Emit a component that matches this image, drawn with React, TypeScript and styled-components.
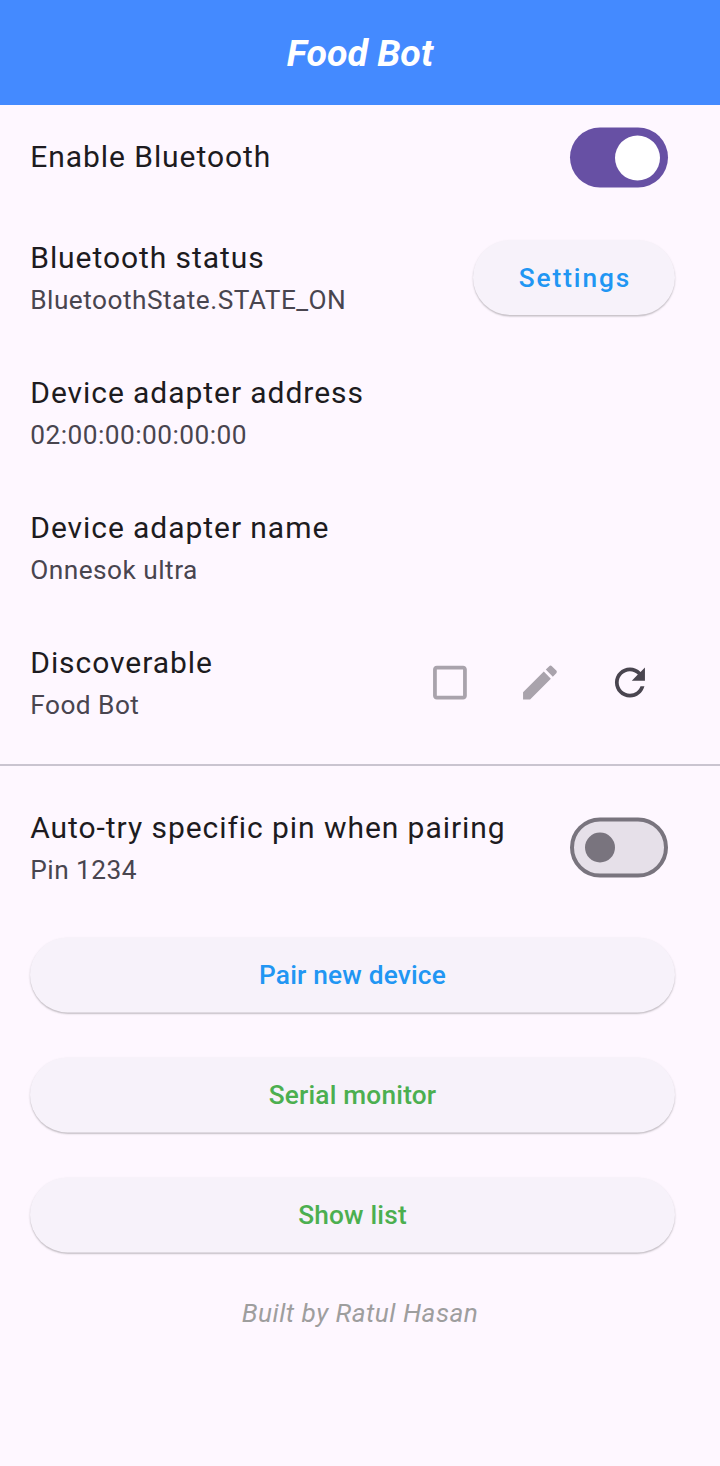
import React from 'react';
import styled, { createGlobalStyle, css } from 'styled-components';

const GlobalStyle = createGlobalStyle`
  * { box-sizing: border-box; }
  body { margin: 0; background: #fef7ff; font-family: Roboto, sans-serif; color: #1d1b20; }
`;

const Screen = styled.main`
  display: flex;
  flex-direction: column;
  min-height: 1466px;
  background: #fef7ff;
`;

const AppBar = styled.header`
  display: flex;
  align-items: center;
  justify-content: center;
  height: 105px;
  background: #448aff;
`;

const Title = styled.h1`
  margin: 0;
  font-size: 37.5px;
  line-height: 44px;
  font-weight: 700;
  font-style: italic;
  color: #fff;
`;

const Tile = styled.section<{ $height: number; $right?: number }>`
  display: flex;
  align-items: center;
  justify-content: space-between;
  height: ${(p) => p.$height}px;
  padding: 0 ${(p) => p.$right ?? 45}px 0 30.25px;
`;

const TileText = styled.div`
  display: flex;
  flex-direction: column;
`;

const Label = styled.div`
  padding-bottom: 2px;
  font-size: 30px;
  line-height: 43px;
  letter-spacing: 0.94px;
  white-space: nowrap;
`;

const Detail = styled.div`
  font-size: 26.25px;
  line-height: 38px;
  letter-spacing: 0.47px;
  color: #49454f;
  white-space: nowrap;
`;

const Switch = styled.div<{ $on?: boolean }>`
  display: flex;
  align-items: center;
  width: 97.5px;
  height: 60px;
  margin-bottom: 1px;
  border-radius: 30px;
  transform: translateY(0.5px);
  ${(p) =>
    p.$on
      ? css`
          justify-content: flex-end;
          padding: 0 7.5px;
          background: #6750a4;
        `
      : css`
          padding: 0 11px;
          background: #e6e0e9;
          border: 4px solid #79747e;
        `}
`;

const Thumb = styled.span<{ $on?: boolean }>`
  width: ${(p) => (p.$on ? 45 : 30)}px;
  height: ${(p) => (p.$on ? 45 : 30)}px;
  border-radius: 50%;
  background: ${(p) => (p.$on ? '#fff' : '#79747e')};
`;

const Button = styled.button<{ $color: string; $width?: number; $spacing?: number }>`
  width: ${(p) => (p.$width ? `${p.$width}px` : '100%')};
  height: 75px;
  padding: 0 0 0 ${(p) => (p.$spacing ?? 0)}px;
  border: 0;
  border-radius: 38px;
  background: #f7f2fa;
  box-shadow: 0 1.5px 1.5px rgba(0, 0, 0, 0.18), 0 1px 3px rgba(0, 0, 0, 0.07);
  font-family: inherit;
  font-size: 26.25px;
  font-weight: 500;
  letter-spacing: ${(p) => p.$spacing ?? 0.19}px;
  color: ${(p) => p.$color};
`;

const Actions = styled.div`
  display: flex;
  width: 270px;
  margin-bottom: 1px;
`;

const IconSlot = styled.span<{ $color: string }>`
  display: flex;
  width: 90px;
  justify-content: center;
  color: ${(p) => p.$color};

  svg {
    width: 45px;
    height: 45px;
    fill: currentColor;
  }
`;

const Divider = styled.hr`
  width: 100%;
  height: 2px;
  margin: 14px 0 14px;
  border: 0;
  background: #cac4d0;
`;

const ButtonList = styled.div`
  display: flex;
  flex-direction: column;
  gap: 45px;
  padding: 22px 45px 0 30px;

  ${Button} {
    padding-top: 1px;
    transform: translateY(0.4px);
  }
`;

const Footer = styled.footer`
  margin-top: 42px;
  font-size: 26.25px;
  line-height: 38px;
  letter-spacing: 0.47px;
  font-style: italic;
  text-align: center;
  color: #9e9e9e;
`;

const Item = ({ label, detail }: { label: string; detail?: string }) => (
  <TileText>
    <Label>{label}</Label>
    {detail && <Detail>{detail}</Detail>}
  </TileText>
);

const Toggle = ({ on }: { on?: boolean }) => (
  <Switch $on={on} role="switch" aria-checked={!!on}>
    <Thumb $on={on} />
  </Switch>
);

export default function App() {
  return (
    <>
      <GlobalStyle />
      <Screen>
        <AppBar>
          <Title>Food Bot</Title>
        </AppBar>
        <Tile $height={105} $right={52.5}>
          <Item label="Enable Bluetooth" />
          <Toggle on />
        </Tile>
        <Tile $height={135}>
          <Item label="Bluetooth status" detail="BluetoothState.STATE_ON" />
          <Button $color="#2196f3" $width={202} $spacing={1.9}>Settings</Button>
        </Tile>
        <Tile $height={135}>
          <Item label="Device adapter address" detail="02:00:00:00:00:00" />
        </Tile>
        <Tile $height={135}>
          <Item label="Device adapter name" detail="Onnesok ultra" />
        </Tile>
        <Tile $height={135}>
          <Item label="Discoverable" detail="Food Bot" />
          <Actions>
            <IconSlot $color="#a9a3ac">
              <svg viewBox="0.3 0 24 24"><path d="M19 5v14H5V5h14m0-2H5c-1.1 0-2 .9-2 2v14c0 1.1.9 2 2 2h14c1.1 0 2-.9 2-2V5c0-1.1-.9-2-2-2z" /></svg>
            </IconSlot>
            <IconSlot $color="#a9a3ac">
              <svg viewBox="0.3 0 24 24"><path d="M3 17.25V21h3.75L17.81 9.94l-3.75-3.75L3 17.25zM20.71 7.04c.39-.39.39-1.02 0-1.41l-2.34-2.34c-.39-.39-1.02-.39-1.41 0l-1.83 1.83 3.75 3.75 1.83-1.83z" /></svg>
            </IconSlot>
            <IconSlot $color="#49454f">
              <svg viewBox="0.3 0 24 24"><path d="M17.65 6.35C16.2 4.9 14.21 4 12 4c-4.42 0-7.99 3.58-7.99 8s3.57 8 7.99 8c3.73 0 6.84-2.55 7.73-6h-2.08c-.82 2.33-3.04 4-5.65 4-3.31 0-6-2.69-6-6s2.69-6 6-6c1.66 0 3.14.69 4.22 1.78L13 11h7V4l-2.35 2.35z" /></svg>
            </IconSlot>
          </Actions>
        </Tile>
        <Divider />
        <Tile $height={135} $right={52.5}>
          <Item label="Auto-try specific pin when pairing" detail="Pin 1234" />
          <Toggle />
        </Tile>
        <ButtonList>
          <Button $color="#2196f3">Pair new device</Button>
          <Button $color="#4caf50">Serial monitor</Button>
          <Button $color="#4caf50">Show list</Button>
        </ButtonList>
        <Footer>Built by Ratul Hasan</Footer>
      </Screen>
    </>
  );
}
